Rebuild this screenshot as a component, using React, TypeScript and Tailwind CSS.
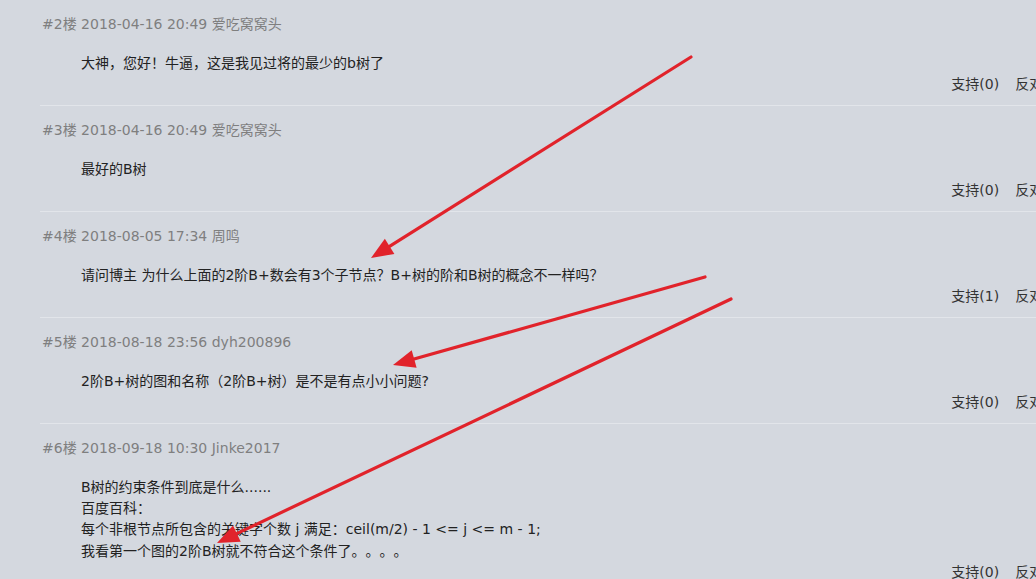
import React from "react";

type Comment = {
  floor: number;
  date: string;
  user: string;
  lines: React.ReactNode[];
  up: number;
  down: number;
};

const comments: Comment[] = [
  { floor: 2, date: "2018-04-16 20:49", user: "爱吃窝窝头", lines: ["大神，您好！牛逼，这是我见过将的最少的b树了"], up: 0, down: 0 },
  { floor: 3, date: "2018-04-16 20:49", user: "爱吃窝窝头", lines: ["最好的B树"], up: 0, down: 0 },
  {
    floor: 4,
    date: "2018-08-05 17:34",
    user: "周鸣",
    lines: ["请问博主 为什么上面的2阶B+数会有3个子节点？B+树的阶和B树的概念不一样吗？"],
    up: 1,
    down: 0,
  },
  { floor: 5, date: "2018-08-18 23:56", user: "dyh200896", lines: ["2阶B+树的图和名称（2阶B+树）是不是有点小小问题?"], up: 0, down: 0 },
  {
    floor: 6,
    date: "2018-09-18 10:30",
    user: "Jinke2017",
    lines: [
      "B树的约束条件到底是什么......",
      "百度百科：",
      "每个非根节点所包含的关键字个数 j 满足：ceil(m/2) - 1 <= j <= m - 1;",
      <>
        我看第一个图的2阶B树就不符合这个条件了
        <span className="font-['Noto_Sans_CJK_SC',sans-serif] [text-spacing-trim:space-all]">。。。。</span>
      </>,
    ],
    up: 0,
    down: 0,
  },
];

// red annotation arrows drawn over the page
const arrows = [
  { x1: 691, y1: 57, x2: 371, y2: 258 },
  { x1: 705, y1: 277, x2: 393, y2: 365 },
  { x1: 731, y1: 299, x2: 217, y2: 543 },
];

function Arrow({ x1, y1, x2, y2 }: { x1: number; y1: number; x2: number; y2: number }) {
  const dx = x2 - x1;
  const dy = y2 - y1;
  const len = Math.hypot(dx, dy);
  const ux = dx / len;
  const uy = dy / len;
  const head = 22;
  const half = 9;
  const bx = x2 - ux * head;
  const by = y2 - uy * head;
  const nx = -uy;
  const ny = ux;
  const pts = `${x2},${y2} ${bx + nx * half},${by + ny * half} ${bx - nx * half},${by - ny * half}`;
  return (
    <g>
      <line x1={x1} y1={y1} x2={bx + ux * 2} y2={by + uy * 2} stroke="#e1232b" strokeWidth={3.2} strokeLinecap="round" />
      <polygon points={pts} fill="#e1232b" />
    </g>
  );
}

export default function App() {
  return (
    <div
      className="relative w-[1036px] h-[579px] overflow-hidden bg-[#d4d8df]"
      style={{ fontFamily: '"DejaVu Sans", Verdana, "Noto Sans CJK SC", sans-serif' }}
    >
      <div className="ml-[40px] w-[1040px]">
        {comments.map((c) => (
          <div key={c.floor} className="pt-[14px] pb-[10px] border-b border-[#e2e5ea]">
            <div className="pl-[2px] text-[14px] leading-[20px] text-[#7f7f7f]">
              #{c.floor}楼 {c.date} {c.user}
            </div>
            <div className="mt-[19px] pl-[41px] text-[14px] leading-[21px] text-[#222]">
              {c.lines.map((l, i) => (
                <div key={i}>{l}</div>
              ))}
            </div>
            <div className="flex justify-end gap-[16px] pr-[17px] text-[14px] leading-[21px] text-[#333]">
              <span>支持({c.up})</span>
              <span>反对({c.down})</span>
            </div>
          </div>
        ))}
      </div>

      <svg className="absolute inset-0 pointer-events-none" width={1036} height={579}>
        {arrows.map((a, i) => (
          <Arrow key={i} {...a} />
        ))}
      </svg>
    </div>
  );
}
